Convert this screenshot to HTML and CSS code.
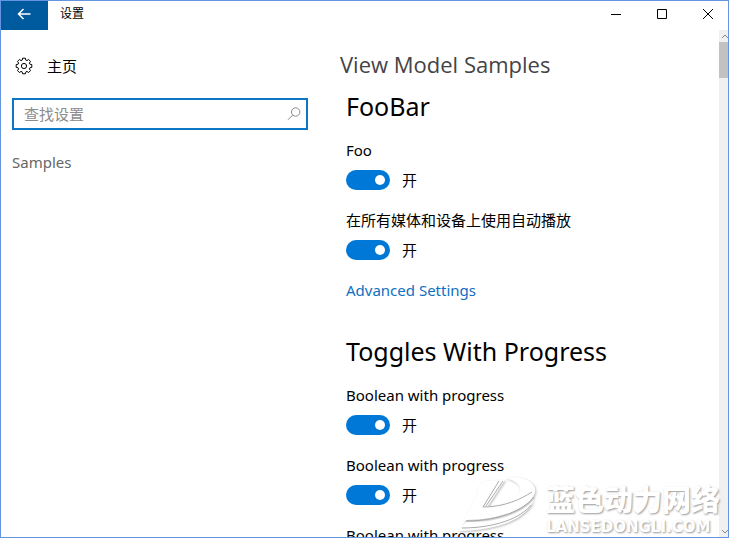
FILE: index.html
```html
<!DOCTYPE html>
<html lang="zh-CN">
<head>
    <meta charset="UTF-8">
    <meta name="viewport" content="width=device-width, initial-scale=1.0">
    <title>设置</title>
    <link rel="stylesheet" href="styles.css">
</head>
<body>
    <div class="window">
        <header class="titlebar">
            <button type="button" class="back" aria-label="Back">
                <svg width="14" height="14" viewBox="0 0 14 14"><path d="M13.500 7H1.500M6.500 2L1.500 7l5 5"/></svg>
            </button>
            <span class="caption">设置</span>
            <button type="button" class="win-btn" aria-label="Minimize">
                <svg width="12" height="12" viewBox="0 0 12 12"><path d="M1 6.500h10"/></svg>
            </button>
            <button type="button" class="win-btn" aria-label="Maximize">
                <svg width="12" height="12" viewBox="0 0 12 12"><path d="M1.500 1.500h9v9h-9z"/></svg>
            </button>
            <button type="button" class="win-btn" aria-label="Close">
                <svg width="12" height="12" viewBox="0 0 12 12"><path d="M1 1l10 10M11 1L1 11"/></svg>
            </button>
        </header>

        <div class="body">
            <nav class="sidebar">
                <a href="#" class="home">
                    <svg width="18" height="18" viewBox="0 0 18 18">
                        <path d="M7.6 1.2h2.8l.4 1.9 1.1.5 1.7-1.1 1.9 1.9-1.1 1.7.5 1.1 1.9.4v2.8l-1.9.4-.5 1.1 1.1 1.7-1.9 1.9-1.7-1.1-1.1.5-.4 1.9H7.6l-.4-1.9-1.1-.5-1.7 1.1-1.9-1.9 1.1-1.7-.5-1.1-1.9-.4V7.6l1.9-.4.5-1.1-1.1-1.7 1.9-1.9 1.7 1.1 1.1-.5z"/>
                        <circle cx="9" cy="9" r="2.6"/>
                    </svg>
                    <span>主页</span>
                </a>
                <form class="search">
                    <input type="text" placeholder="查找设置" aria-label="查找设置">
                    <button type="button" aria-label="Search">
                        <svg width="14" height="14" viewBox="0 0 14 14"><circle cx="8.7" cy="5" r="4.2"/><path d="M5.7 8L1 12.8"/></svg>
                    </button>
                </form>
                <a href="#" class="nav-link">Samples</a>
            </nav>

            <main class="content">
                <h1>View Model Samples</h1>

                <section class="group">
                    <h2>FooBar</h2>
                    <div class="setting">
                        <label for="foo">Foo</label>
                        <div class="toggle"><input type="checkbox" id="foo" checked><span>开</span></div>
                    </div>
                    <div class="setting">
                        <label for="autoplay">在所有媒体和设备上使用自动播放</label>
                        <div class="toggle"><input type="checkbox" id="autoplay" checked><span>开</span></div>
                    </div>
                    <a href="#" class="more">Advanced Settings</a>
                </section>

                <section class="group">
                    <h2>Toggles With Progress</h2>
                    <div class="setting">
                        <label for="bool1">Boolean with progress</label>
                        <div class="toggle"><input type="checkbox" id="bool1" checked><span>开</span></div>
                    </div>
                    <div class="setting">
                        <label for="bool2">Boolean with progress</label>
                        <div class="toggle"><input type="checkbox" id="bool2" checked><span>开</span></div>
                    </div>
                    <div class="setting">
                        <label for="bool3">Boolean with progress</label>
                        <div class="toggle"><input type="checkbox" id="bool3" checked><span>开</span></div>
                    </div>
                </section>
            </main>

            <div class="scrollbar">
                <svg width="9" height="12" viewBox="0 0 9 12"><path d="M3 8l3-3 3 3"/></svg>
                <div class="thumb"></div>
                <svg width="9" height="12" viewBox="0 0 9 12"><path d="M3 5l3 3 3-3"/></svg>
            </div>
        </div>

        <div class="watermark">
            <svg width="86" height="64" viewBox="0 0 86 64">
                <path class="mark" d="M20 17L26 8 48 7 31 33C45 33 60 27 63 19 65 12 57 7 48 5 66 2 80 9 78 20 72 36 42 47 9 47L3 56 21 18z"/>
                <path class="mark" d="M9 49C42 50 68 39 77 26 71 45 42 58 1 58z"/>
                <path class="line" d="M46 8L29 33M42 8L26 34C48 34 64 26 75 19M9 48C42 48 67 37 77 24M5 55C38 55 64 45 74 32"/>
            </svg>
            <div class="brand">
                <span class="brand-name">蓝色动力网络</span>
                <span class="brand-site">LANSEDONGLI.COM</span>
            </div>
        </div>
    </div>
</body>
</html>
```
FILE: styles.css
```css
* {
    box-sizing: border-box;
}

body {
    margin: 0;
    background: #fff;
    color: #000;
    font-family: "Noto Sans", "Noto Sans CJK SC", sans-serif;
    font-size: 15px;
    line-height: 20px;
}

button {
    padding: 0;
    border: none;
    background: none;
}

a {
    text-decoration: none;
}

svg {
    display: block;
    fill: none;
    stroke: #000;
}

.window {
    position: relative;
    display: flex;
    flex-direction: column;
    height: 100vh;
    border: 1px solid #6595e0;
    overflow: hidden;
}

/* title bar */
.titlebar {
    display: flex;
    flex-shrink: 0;
    height: 29px;
}

.back {
    display: flex;
    align-items: center;
    justify-content: center;
    width: 47px;
    padding: 0 2px 3px 0;
    background: #005a9e;
}

.back svg {
    stroke: #fff;
    stroke-width: 1.5;
}

.caption {
    flex: 1;
    padding: 3px 12px;
    font-size: 12px;
}

.win-btn {
    display: flex;
    align-items: center;
    justify-content: center;
    width: 46px;
    height: 26px;
}

.win-btn:last-child {
    margin-right: -3px;
}

.body {
    display: flex;
    flex: 1;
    min-height: 0;
}

/* left side */
.sidebar {
    flex: 0 0 307px;
    padding-left: 11px;
}

.home {
    display: flex;
    align-items: center;
    gap: 14px;
    height: 32px;
    margin: 20px 0 16px 3px;
    color: #000;
}

.search {
    display: flex;
    align-items: center;
    height: 32px;
    padding: 0 5px 0 10px;
    border: 2px solid #0f76c6;
}

.search input {
    flex: 1;
    min-width: 0;
    padding: 0;
    border: none;
    outline: none;
    font: inherit;
}

.search input::placeholder {
    color: #8c8c8c;
}

.search svg {
    stroke: #8c8c8c;
}

.nav-link {
    display: block;
    margin-top: 22px;
    color: #666;
}

/* right side */
.content {
    flex: 1;
    min-width: 0;
    padding: 18px 0 0 32px;
    overflow: hidden;
}

h1, h2 {
    margin: 0;
    font-weight: normal;
}

h1 {
    margin-bottom: 8px;
    color: #444;
    font-family: "Open Sans", sans-serif;
    font-size: 22px;
    line-height: 32px;
}

h2 {
    margin-bottom: 16px;
    font-size: 25px;
    line-height: 36px;
}

.group {
    margin-bottom: 33px;
    padding-left: 6px;
}

.setting {
    margin-bottom: 20px;
}

.setting label {
    display: block;
    margin-bottom: 10px;
}

.toggle {
    display: flex;
    align-items: center;
    gap: 12px;
    height: 20px;
}

.toggle input {
    appearance: none;
    display: flex;
    align-items: center;
    justify-content: flex-end;
    width: 44px;
    height: 20px;
    margin: 0;
    padding-right: 5px;
    border-radius: 10px;
    background: #0078d7;
}

.toggle input::before {
    content: "";
    width: 10px;
    height: 10px;
    border-radius: 50%;
    background: #fff;
}

.toggle input:not(:checked) {
    justify-content: flex-start;
    padding: 0 0 0 5px;
    background: #999;
}

.more {
    display: block;
    color: #0f6fc0;
}

.scrollbar {
    display: flex;
    flex-direction: column;
    width: 9px;
    background: #f0f0f0;
}

.scrollbar svg {
    stroke: #888;
}

.thumb {
    height: 36px;
    margin-bottom: auto;
    background: #c1c1c1;
}

/* logo over the bottom right corner */
.watermark {
    position: absolute;
    right: 8px;
    bottom: 0;
    display: flex;
    align-items: flex-end;
    gap: 3px;
    pointer-events: none;
}

.watermark svg {
    filter: drop-shadow(1px 1px 1px #bbb);
}

.mark {
    fill: #fff;
    stroke: none;
}

.line {
    stroke: #aaa;
}

.brand {
    display: flex;
    flex-direction: column;
    color: #fff;
    font-weight: bold;
    white-space: nowrap;
    text-shadow: 1px 1px 2px #999;
}

.brand-name {
    font-family: "Noto Sans CJK SC", sans-serif;
    font-size: 29px;
    font-weight: 900;
    line-height: 38px;
}

.brand-site {
    font-family: "DejaVu Sans", sans-serif;
    font-size: 15px;
    line-height: 20px;
}
```
